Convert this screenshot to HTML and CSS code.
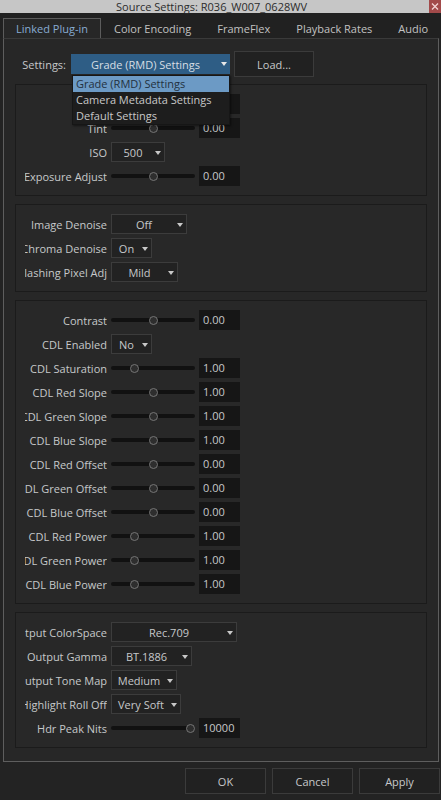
FILE: index.html
```html
<!DOCTYPE html>
<html>
<head>
    <title>Source Settings</title>
    <link rel="stylesheet" href="styles.css">
</head>
<body>
    <div class="titlebar">
        <span class="title">Source Settings: R036_W007_0628WV</span>
        <span class="close">
            <svg width="12" height="13" viewBox="0 0 12 13"><path d="M3 3.5l6 6M9 3.5l-6 6" stroke="#f2d4d4" stroke-width="1.3"/></svg>
        </span>
    </div>

    <div class="tabs">
        <div class="tab active">Linked Plug-in</div>
        <div class="tab">Color Encoding</div>
        <div class="tab">FrameFlex</div>
        <div class="tab">Playback Rates</div>
        <div class="tab">Audio</div>
    </div>

    <div class="panel">
        <div class="settings-row">
            <span class="settings-label">Settings:</span>
            <div class="preset">
                <span class="combo-text">Grade (RMD) Settings</span>
                <span class="arrow"></span>
                <ul class="preset-list">
                    <li class="selected">Grade (RMD) Settings</li>
                    <li>Camera Metadata Settings</li>
                    <li>Default Settings</li>
                </ul>
            </div>
            <button class="btn load">Load...</button>
        </div>

        <!-- white balance / exposure -->
        <div class="group">
            <div class="row">
                <span class="label"><span>Kelvin</span></span>
                <div class="slider"><div class="rail"><span class="knob" style="left: 50%"></span></div></div>
                <span class="value">5600</span>
            </div>
            <div class="row">
                <span class="label"><span>Tint</span></span>
                <div class="slider"><div class="rail"><span class="knob" style="left: 50%"></span></div></div>
                <span class="value">0.00</span>
            </div>
            <div class="row">
                <span class="label"><span>ISO</span></span>
                <div class="combo w54"><span class="combo-text">500</span><span class="arrow"></span></div>
            </div>
            <div class="row">
                <span class="label"><span>Exposure Adjust</span></span>
                <div class="slider"><div class="rail"><span class="knob" style="left: 50%"></span></div></div>
                <span class="value">0.00</span>
            </div>
        </div>

        <!-- noise -->
        <div class="group">
            <div class="row">
                <span class="label"><span>Image Denoise</span></span>
                <div class="combo w76"><span class="combo-text">Off</span><span class="arrow"></span></div>
            </div>
            <div class="row">
                <span class="label"><span>Chroma Denoise</span></span>
                <div class="combo w41"><span class="combo-text">On</span><span class="arrow"></span></div>
            </div>
            <div class="row">
                <span class="label"><span>Flashing Pixel Adj</span></span>
                <div class="combo w67"><span class="combo-text">Mild</span><span class="arrow"></span></div>
            </div>
        </div>

        <!-- contrast + CDL -->
        <div class="group">
            <div class="row">
                <span class="label"><span>Contrast</span></span>
                <div class="slider"><div class="rail"><span class="knob" style="left: 50%"></span></div></div>
                <span class="value">0.00</span>
            </div>
            <div class="row">
                <span class="label"><span>CDL Enabled</span></span>
                <div class="combo w41"><span class="combo-text">No</span><span class="arrow"></span></div>
            </div>
            <div class="row">
                <span class="label"><span>CDL Saturation</span></span>
                <div class="slider"><div class="rail"><span class="knob" style="left: 25%"></span></div></div>
                <span class="value">1.00</span>
            </div>
            <div class="row">
                <span class="label"><span>CDL Red Slope</span></span>
                <div class="slider"><div class="rail"><span class="knob" style="left: 50%"></span></div></div>
                <span class="value">1.00</span>
            </div>
            <div class="row">
                <span class="label"><span>CDL Green Slope</span></span>
                <div class="slider"><div class="rail"><span class="knob" style="left: 50%"></span></div></div>
                <span class="value">1.00</span>
            </div>
            <div class="row">
                <span class="label"><span>CDL Blue Slope</span></span>
                <div class="slider"><div class="rail"><span class="knob" style="left: 50%"></span></div></div>
                <span class="value">1.00</span>
            </div>
            <div class="row">
                <span class="label"><span>CDL Red Offset</span></span>
                <div class="slider"><div class="rail"><span class="knob" style="left: 50%"></span></div></div>
                <span class="value">0.00</span>
            </div>
            <div class="row">
                <span class="label"><span>CDL Green Offset</span></span>
                <div class="slider"><div class="rail"><span class="knob" style="left: 50%"></span></div></div>
                <span class="value">0.00</span>
            </div>
            <div class="row">
                <span class="label"><span>CDL Blue Offset</span></span>
                <div class="slider"><div class="rail"><span class="knob" style="left: 50%"></span></div></div>
                <span class="value">0.00</span>
            </div>
            <div class="row">
                <span class="label"><span>CDL Red Power</span></span>
                <div class="slider"><div class="rail"><span class="knob" style="left: 25%"></span></div></div>
                <span class="value">1.00</span>
            </div>
            <div class="row">
                <span class="label"><span>CDL Green Power</span></span>
                <div class="slider"><div class="rail"><span class="knob" style="left: 25%"></span></div></div>
                <span class="value">1.00</span>
            </div>
            <div class="row">
                <span class="label"><span>CDL Blue Power</span></span>
                <div class="slider"><div class="rail"><span class="knob" style="left: 25%"></span></div></div>
                <span class="value">1.00</span>
            </div>
        </div>

        <!-- output transform -->
        <div class="group">
            <div class="row">
                <span class="label"><span>Output ColorSpace</span></span>
                <div class="combo w126"><span class="combo-text">Rec.709</span><span class="arrow"></span></div>
            </div>
            <div class="row">
                <span class="label"><span>Output Gamma</span></span>
                <div class="combo w81"><span class="combo-text">BT.1886</span><span class="arrow"></span></div>
            </div>
            <div class="row">
                <span class="label"><span>Output Tone Map</span></span>
                <div class="combo w66"><span class="combo-text">Medium</span><span class="arrow"></span></div>
            </div>
            <div class="row">
                <span class="label"><span>Highlight Roll Off</span></span>
                <div class="combo w70"><span class="combo-text">Very Soft</span><span class="arrow"></span></div>
            </div>
            <div class="row">
                <span class="label"><span>Hdr Peak Nits</span></span>
                <div class="slider"><div class="rail"><span class="knob" style="left: 100%"></span></div></div>
                <span class="value">10000</span>
            </div>
        </div>
    </div>

    <div class="footer">
        <button class="btn">OK</button>
        <button class="btn">Cancel</button>
        <button class="btn">Apply</button>
    </div>
</body>
</html>
```

FILE: styles.css
```css
body { margin: 0; background: #232323; font-family: "Open Sans", "Noto Sans", sans-serif; font-size: 11px; color: #c6c8ca; }

.titlebar { height: 13px; background: #c6c6c6; position: relative; z-index: 1; text-align: center; padding-right: 18px; }
.title { display: block; line-height: 13px; font-size: 11px; color: #2c2c2c; white-space: nowrap; }
.close { position: absolute; right: 0; top: 0; width: 12px; height: 13px; background: #a24a4a; }
.close svg { display: block; }

.tabs { display: flex; padding: 5px 0 0 3px; background: #212121; }
.tab { flex-shrink: 0; white-space: nowrap; height: 20px; line-height: 20px; padding: 0 12px; color: #c2c2c2; border: 1px solid transparent; border-bottom: none; box-sizing: border-box; }
.tab.active { color: #87acd3; border-color: #5c5c5c; background: #272727; }

.panel { margin: 0 2px 0 3px; height: 724px; box-sizing: border-box; padding: 12px 11px 0; background: #272727; border: 1px solid #5e5e5e; border-top-color: #3a3a3a; }

.settings-row { display: flex; align-items: center; height: 26px; margin-bottom: 7px; }
.settings-label { width: 51px; text-align: right; margin-right: 5px; }
.preset { position: relative; width: 159px; height: 20px; display: flex; align-items: center; background: #2e5d85; color: #d6dde4; box-sizing: border-box; }
.preset .combo-text { flex: 1; text-align: center; padding-right: 10px; }
.preset .arrow { border-top-color: #e8e8e8; }
.preset-list { position: absolute; left: 1px; top: 21px; width: 158px; margin: 0; padding: 0; list-style: none; background: #1d1d1d; border: 1px solid #161616; box-sizing: border-box; box-shadow: 1px 1px 2px rgba(0,0,0,0.5); z-index: 2; }
.preset-list li { height: 16px; line-height: 15px; padding-left: 3px; color: #c8c8c8; white-space: nowrap; }
.preset-list li.selected { background: #6c9ac5; color: #233140; }

.btn { font-family: inherit; font-size: 11px; color: #c6c8ca; background: #212121; border: 1px solid #3b3b3b; padding: 0; }
.btn.load { width: 80px; height: 26px; margin-left: 4px; }

.group { border: 1px solid #1b1b1b; background: #282828; padding: 9px 9px; margin-bottom: 8px; display: flex; flex-direction: column; gap: 4px; }

.row { display: flex; align-items: center; height: 20px; gap: 4px; }
.label { width: 82px; display: flex; justify-content: flex-end; overflow: hidden; white-space: nowrap; }

.slider { position: relative; width: 84px; height: 20px; }
.slider::before { content: ""; position: absolute; left: 0; right: 0; top: 8px; height: 4px; border-radius: 2px; background: #111; }
.rail { position: relative; margin: 0 4.5px; height: 20px; }
.knob { position: absolute; top: 5.5px; width: 9px; height: 9px; margin-left: -4.5px; box-sizing: border-box; border-radius: 50%; border: 1px solid #767676; background: #2e2e2e; }

.value { width: 41px; height: 20px; line-height: 20px; padding-left: 4px; box-sizing: border-box; background: #161616; }

.combo { position: relative; height: 20px; display: flex; align-items: center; box-sizing: border-box; border: 1px solid #3c3c3c; background: #222; }
.combo .combo-text { flex: 1; text-align: center; padding-right: 10px; }
.arrow { position: absolute; right: 3px; top: 8px; width: 0; height: 0; border-left: 3px solid transparent; border-right: 3px solid transparent; border-top: 4px solid #c8c8c8; }
.w41 { width: 41px; }
.w54 { width: 54px; }
.w66 { width: 66px; }
.w67 { width: 67px; }
.w70 { width: 70px; }
.w76 { width: 76px; }
.w81 { width: 81px; }
.w126 { width: 126px; }

.footer { display: flex; justify-content: flex-end; gap: 6px; padding: 6px 1px 0 0; }
.footer .btn { width: 81px; height: 26px; }
```
